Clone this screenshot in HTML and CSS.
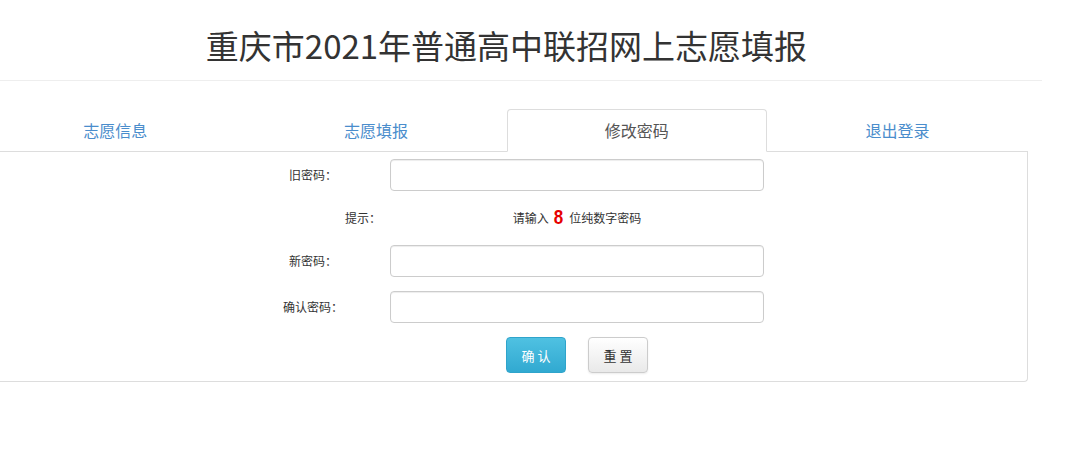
FILE: index.html
```html
<!DOCTYPE html>
<html lang="zh-CN">
<head>
<meta charset="utf-8">
<title>重庆市2021年普通高中联招网上志愿填报</title>
<link rel="stylesheet" href="styles.css">
</head>
<body>
<div class="header">
  <h1 class="title">重庆市2021年普通高中联招网上志愿填报</h1>
</div>
<div class="container">
  <ul class="tabs">
    <li class="tab"><a>志愿信息</a></li>
    <li class="tab"><a>志愿填报</a></li>
    <li class="tab active"><a>修改密码</a></li>
    <li class="tab"><a>退出登录</a></li>
  </ul>
  <div class="panel">
    <div class="form">
      <div class="label">旧密码：</div>
      <div class="field"><input class="input" type="password"></div>

      <div class="label hint-label">提示：</div>
      <div class="hint">请输入 <b class="num">8</b> 位纯数字密码</div>

      <div class="label">新密码：</div>
      <div class="field"><input class="input" type="password"></div>

      <div class="label">确认密码：</div>
      <div class="field"><input class="input" type="password"></div>

      <div class="actions">
        <button class="btn btn-primary">确 认</button>
        <button class="btn btn-default">重 置</button>
      </div>
    </div>
  </div>
</div>
</body>
</html>
```

FILE: styles.css
```css
html, body {
  margin: 0;
  padding: 0;
  background: #fff;
  overflow: hidden;
}
body {
  font-family: "Noto Sans CJK SC", "Noto Sans", sans-serif;
  color: #333;
  font-size: 12px;
}
.header {
  margin-left: -15px;
  width: 1057px;
  padding-top: 22px;
  padding-bottom: 12px;
  border-bottom: 1px solid #eeeeee;
}
.title {
  margin: 0;
  width: 1043px;
  text-align: center;
  font-size: 33px;
  font-weight: normal;
  line-height: 46px;
  color: #333333;
}
.container {
  margin-left: -15px;
  width: 1043px;
  margin-top: 28px;
}
.tabs {
  list-style: none;
  margin: 0;
  padding: 0;
  display: flex;
  border-bottom: 1px solid #dddddd;
}
.tab {
  flex: 1;
  margin-bottom: -1px;
}
.tab a {
  display: block;
  height: 41px;
  line-height: 41px;
  text-align: center;
  font-size: 16px;
  color: #4a8dcc;
  border: 1px solid transparent;
  border-radius: 4px 4px 0 0;
}
.tab.active a {
  color: #555;
  background: #fff;
  border-color: #dddddd #dddddd transparent #dddddd;
}
.panel {
  border: 1px solid #dddddd;
  border-top: none;
  border-radius: 0 0 4px 4px;
  padding: 7px 0 8px;
}
.form {
  display: grid;
  grid-template-columns: 154px 374px;
  row-gap: 14px;
  margin-left: 250px;
}
.label {
  height: 32px;
  line-height: 32px;
  text-align: center;
  color: #333;
  font-size: 12px;
}
.hint-label {
  height: 26px;
  line-height: 26px;
  text-align: right;
  padding-right: 9px;
}
.field {
  height: 32px;
}
.input {
  box-sizing: border-box;
  width: 374px;
  height: 32px;
  margin: 0;
  border: 1px solid #cccccc;
  border-radius: 4px;
  box-shadow: inset 0 1px 1px rgba(0,0,0,0.075);
  background: #fff;
  display: block;
}
.hint {
  height: 26px;
  line-height: 26px;
  text-align: center;
  font-size: 12px;
  color: #333;
}
.num {
  display: inline-block;
  color: #e60000;
  font-size: 20px;
  font-weight: bold;
  font-family: "Liberation Sans", sans-serif;
  transform: scaleX(0.85);
  margin: 0 2px;
  vertical-align: -1px;
  line-height: 20px;
}
.actions {
  grid-column: 2;
  display: flex;
  justify-content: center;
  gap: 22px;
}
.btn {
  width: 60px;
  height: 36px;
  border-radius: 4px;
  font-family: "Noto Sans CJK SC", sans-serif;
  font-size: 13px;
  cursor: pointer;
  padding: 0;
}
.btn-primary {
  color: #fff;
  background: linear-gradient(#4fc1e2, #31a9d1);
  border: 1px solid #2fa4cb;
}
.btn-default {
  color: #333;
  background: linear-gradient(#ffffff, #e9e9e9);
  border: 1px solid #cccccc;
  box-shadow: 0 1px 2px rgba(0,0,0,0.08);
}
```
